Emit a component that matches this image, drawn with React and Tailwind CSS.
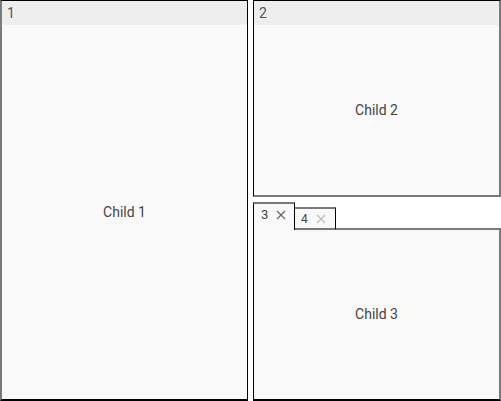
import React from "react";

function X({ className }) {
  return (
    <svg width="10" height="10" viewBox="0 0 10 10" className={className}>
      <path d="M1 1 L9 9 M9 1 L1 9" stroke="currentColor" strokeWidth="1.2" fill="none" />
    </svg>
  );
}

export default function App() {
  return (
    <div
      className="w-[501px] h-[401px] bg-white flex gap-[5px] overflow-hidden"
      style={{ fontFamily: "Roboto, 'Liberation Sans', sans-serif" }}
    >
      <div className="w-[248px] h-full flex flex-col bg-[#f9f9f9] border-t border-t-black border-l-2 border-l-[#7a7a7a] border-r border-r-black border-b-2 border-b-black">
        <div className="h-[24px] bg-[#eeeeee] text-[14px] text-[#555] pl-[5px] pt-[3px] leading-[18px]">1</div>
        <div className="flex-1 flex items-center justify-center text-[14px] text-[#444]">Child 1</div>
      </div>
      <div className="w-[248px] h-full flex flex-col">
        <div className="h-[197px] flex flex-col bg-[#f9f9f9] border-t border-t-black border-l border-l-black border-r-2 border-r-[#7a7a7a] border-b-2 border-b-[#7a7a7a]">
          <div className="h-[24px] bg-[#eeeeee] text-[14px] text-[#555] pl-[5px] pt-[3px] leading-[18px]">2</div>
          <div className="flex-1 flex items-center justify-center text-[14px] text-[#444]">Child 2</div>
        </div>
        <div className="mt-[5px] flex-1 flex flex-col">
          <div className="h-[28px] flex items-start">
            <div className="h-[28px] w-[42px] flex items-center gap-[8px] pl-[7px] pb-[4px] bg-[#f9f9f9] border-t-2 border-t-[#7a7a7a] border-l border-l-black border-r border-r-black text-[13px] text-[#444]">
              <span>3</span>
              <X className="text-[#666]" />
            </div>
            <div className="mt-[5px] h-[23px] w-[41px] flex items-center gap-[8px] pl-[6px] bg-[#f9f9f9] border-t-2 border-t-[#7a7a7a] border-r border-r-black border-b-2 border-b-[#7a7a7a] text-[12px] text-[#444]">
              <span>4</span>
              <X className="text-[#bbb]" />
            </div>
            <div className="flex-1 h-[28px] border-b-2 border-b-[#7a7a7a]"></div>
          </div>
          <div className="flex-1 flex items-center justify-center bg-[#f9f9f9] border-l border-l-black border-r-2 border-r-[#7a7a7a] border-b-2 border-b-black text-[14px] text-[#444]">
            Child 3
          </div>
        </div>
      </div>
    </div>
  );
}
